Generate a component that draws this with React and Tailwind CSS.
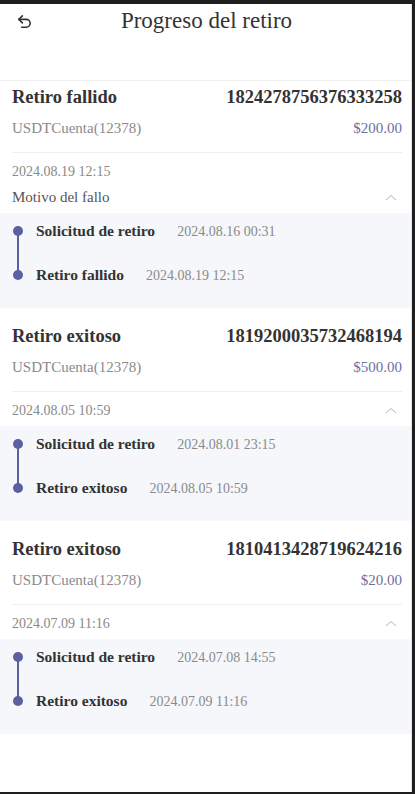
import React from "react";

const records = [
  {
    id: "1824278756376333258",
    status: "Retiro fallido",
    account: "USDTCuenta(12378)",
    amount: "$200.00",
    date: "2024.08.19 12:15",
    reason: "Motivo del fallo",
    steps: [
      { label: "Solicitud de retiro", time: "2024.08.16 00:31" },
      { label: "Retiro fallido", time: "2024.08.19 12:15" },
    ],
  },
  {
    id: "1819200035732468194",
    status: "Retiro exitoso",
    account: "USDTCuenta(12378)",
    amount: "$500.00",
    date: "2024.08.05 10:59",
    steps: [
      { label: "Solicitud de retiro", time: "2024.08.01 23:15" },
      { label: "Retiro exitoso", time: "2024.08.05 10:59" },
    ],
  },
  {
    id: "1810413428719624216",
    status: "Retiro exitoso",
    account: "USDTCuenta(12378)",
    amount: "$20.00",
    date: "2024.07.09 11:16",
    steps: [
      { label: "Solicitud de retiro", time: "2024.07.08 14:55" },
      { label: "Retiro exitoso", time: "2024.07.09 11:16" },
    ],
  },
];

function ChevronUp() {
  return (
    <svg width="12" height="7" viewBox="0 0 12 7" fill="none" className="mr-[5px]">
      <path d="M1 6 6 1.5 11 6" stroke="#b5b5b5" strokeWidth="1" />
    </svg>
  );
}

function RecordCard({ r }) {
  return (
    <article className="pt-[5px] mb-3">
      <div className="pl-3 pr-[9px]">
        <div className="flex justify-between items-center h-6 text-[18.5px] font-bold text-[#333]">
          <span>{r.status}</span>
          <span>{r.id}</span>
        </div>
        <div className="flex justify-between items-center h-5 mt-2 text-[15px]">
          <span className="text-[#8a8a8a]">{r.account}</span>
          <span className="text-[#6e6f9f]">{r.amount}</span>
        </div>
        <div className="h-px bg-[#eeeeee] mt-[14px]" />
        <div className="flex justify-between items-center h-5 mt-2 text-[14px] text-[#8a8a8a]">
          <span>{r.date}</span>
          {!r.reason && <ChevronUp />}
        </div>
        {r.reason && (
          <div className="flex justify-between items-center h-5 mt-[6px] text-[15px] text-[#555]">
            <span>{r.reason}</span>
            <ChevronUp />
          </div>
        )}
      </div>

      <div className="mt-[6px] bg-[#f5f7fb] pt-[7px] pb-[22px]">
        {r.steps.map((s, i) => (
          <div key={i} className={`relative flex items-center h-[22px] pl-9 ${i > 0 ? "mt-[22px]" : ""}`}>
            <span className="absolute left-[13px] top-[6px] w-[10px] h-[10px] rounded-full bg-[#5c5fa2]" />
            {i > 0 && (
              <span className="absolute left-[17px] bottom-[11px] w-[2px] h-[44px] bg-[#5c5fa2]" />
            )}
            <span className="text-[15.5px] font-bold text-[#333]">{s.label}</span>
            <span className="ml-[22px] text-[14px] text-[#8a8a8a]">{s.time}</span>
          </div>
        ))}
      </div>
    </article>
  );
}

export default function App() {
  return (
    <div
      className="w-[415px] h-[794px] bg-[#1e1e1e] pt-1 pr-[3px] pb-[2px] overflow-hidden"
      style={{ fontFamily: '"Liberation Serif", serif' }}
    >
      <div className="h-full bg-white border-r border-[#e4e4e4]">
        <header className="relative h-[77px] border-b border-[#f0f0f0]">
          <div className="flex items-center h-[35px]">
            <svg
              width="17"
              height="17"
              viewBox="0 0 24 24"
              fill="none"
              stroke="#333"
              strokeWidth="2.2"
              strokeLinecap="round"
              strokeLinejoin="round"
              className="ml-[16px]"
            >
              <path d="M9 14 4 9l5-5" />
              <path d="M4 9h10.5a5.5 5.5 0 0 1 0 11H8" />
            </svg>
            <h1 className="flex-1 text-center text-[23px] text-[#333] mr-[31px]">Progreso del retiro</h1>
          </div>
        </header>
        {records.map((r) => (
          <RecordCard key={r.id} r={r} />
        ))}
      </div>
    </div>
  );
}
